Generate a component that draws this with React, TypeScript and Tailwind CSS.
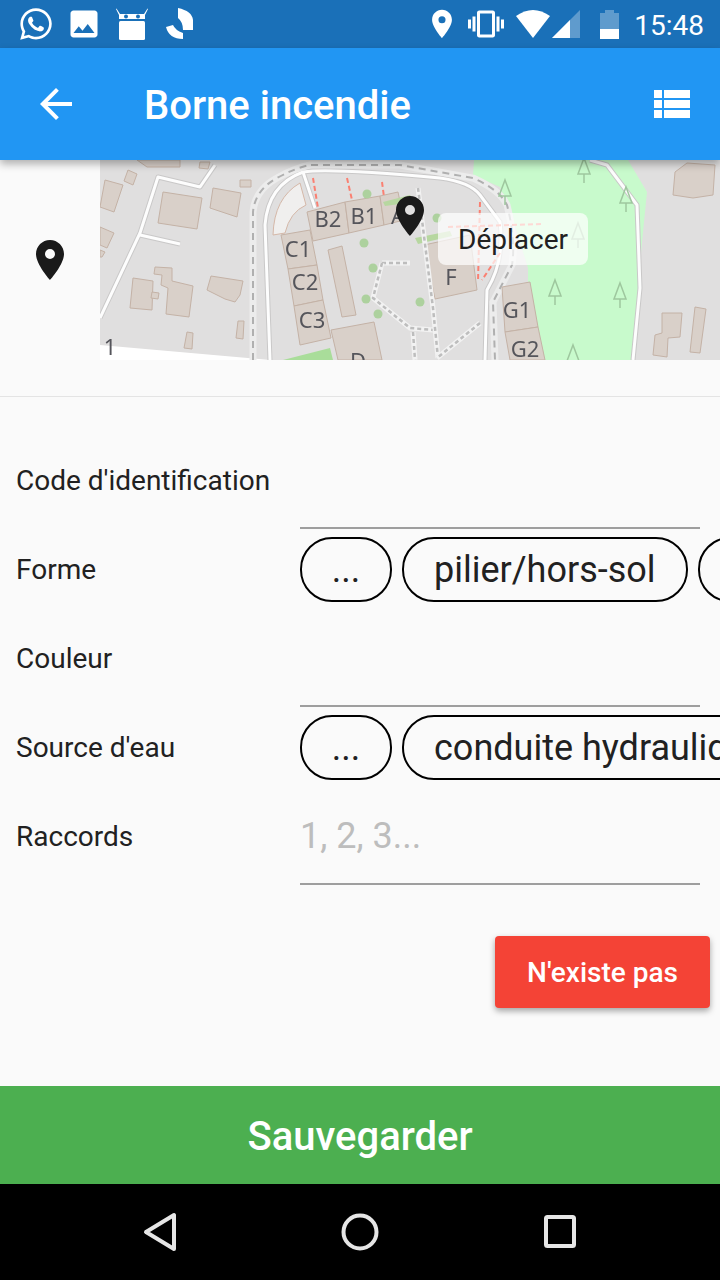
import { FaWhatsapp } from "react-icons/fa";
import { MdArrowBack, MdPhoto, MdPlace, MdVibration } from "react-icons/md";

/* ── Map data, in page coordinates ── */
const buildings = [
  "105,180 123,185 114,212 100,207",
  "128,170 137,174 133,185 124,181",
  "163,192 202,198 197,229 158,223",
  "213,188 241,193 237,217 225,213 210,208",
  "240,180 251,180 251,187 240,187",
  "137,160 180,160 180,167 147,167",
  "200,162 210,162 208,169 199,168",
  "100,227 114,233 107,248 100,245",
  "100,250 105,252 102,257 100,257",
  "133,278 153,281 152,310 130,308",
  "152,292 159,293 158,299 151,298",
  "155,267 172,268 172,281 193,286 189,317 166,314 168,288 161,285 162,275 154,274",
  "211,276 243,281 240,295 235,302 225,299 207,290",
  "187,332 193,333 192,349 184,348",
  "238,321 244,321 243,339 236,338",
  "281,235 310,230 317,265 288,269",
  "288,269 317,265 323,300 294,306",
  "294,306 323,300 331,338 300,345",
  "307,212 345,202 349,233 313,241",
  "345,202 380,196 384,225 349,233",
  "380,196 398,192 404,220 384,225",
  "328,250 342,246 356,315 342,317",
  "331,330 374,322 382,360 338,360",
  "424,245 470,235 477,290 435,299",
  "502,287 530,282 538,327 505,332",
  "505,332 538,327 545,360 510,360",
  "675,172 687,163 715,165 713,195 693,198 673,195",
  "662,313 682,313 680,337 668,338 667,357 653,355 655,335 662,333",
  "695,307 706,309 700,353 690,352",
];

const labels = [
  { t: "B2", x: 328, y: 227 },
  { t: "B1", x: 364, y: 224 },
  { t: "A", x: 398, y: 224 },
  { t: "C1", x: 298, y: 257 },
  { t: "C2", x: 305, y: 290 },
  { t: "C3", x: 312, y: 328 },
  { t: "F", x: 451, y: 285 },
  { t: "G1", x: 517, y: 318 },
  { t: "G2", x: 525, y: 357 },
  { t: "D", x: 358, y: 369 },
  { t: "1", x: 110, y: 355 },
];

const roads = [
  "M270 360 L265 225 Q268 185 303 172 Q330 168 440 178 Q470 182 480 195 L500 222 Q505 260 487 290 L485 360",
  "M100 318 L140 233 L158 177 L200 187 L215 165",
  "M140 235 L180 244",
  "M590 160 L607 165 L637 205 L640 288 L633 360",
  "M303 172 L315 208",
];

const dashed = [
  "M253 360 L253 212 Q255 190 277 178 Q295 168 310 165 L400 165 L473 178 Q500 190 507 205 Q516 240 512 265 L493 302 L495 360",
];

const footpaths = [
  "M382 263 L410 263",
  "M382 263 L373 298 L410 328 L433 330",
  "M418 188 L433 308 L438 358",
  "M480 323 L437 358",
  "M413 332 L415 360",
];

const redPaths = [
  "M313 178 L318 208",
  "M347 178 L352 200",
  "M382 182 L384 197",
  "M480 202 L478 282",
  "M448 227 L543 224",
  "M500 253 L482 280",
];

const trees = [
  [367, 194],
  [364, 243],
  [373, 268],
  [366, 299],
  [378, 314],
  [420, 302],
  [437, 218],
];

const pines = [
  [555, 280],
  [620, 283],
  [578, 223],
  [573, 345],
  [505, 180],
  [584, 158],
  [626, 187],
];

/* ── Map drawing ── */
const MapDrawing = () => (
  <svg viewBox="100 160 620 200" className="block h-[200px] w-[620px] blur-[0.7px]">
    <rect x="100" y="160" width="620" height="200" fill="#e0dfdf" />
    <polygon points="100,345 270,360 100,360" fill="#ffffff" />
    <polygon
      points="474,160 628,160 647,192 642,242 632,360 528,360 528,268 513,220 500,187 473,175"
      fill="#c8facc"
    />
    <path d="M273 235 Q274 198 300 183 L306 205 Q290 212 285 233 Z" fill="#f0efee" stroke="#d5b8a8" />
    {roads.map((d, i) => (
      <path key={i} d={d} fill="none" stroke="#c9c8c8" strokeWidth="5" strokeLinejoin="round" />
    ))}
    {roads.map((d, i) => (
      <path key={i} d={d} fill="none" stroke="#fdfdfd" strokeWidth="3" strokeLinejoin="round" />
    ))}
    {dashed.map((d, i) => (
      <g key={i}>
        <path d={d} fill="none" stroke="#ececec" strokeWidth="7" />
        <path d={d} fill="none" stroke="#b0b0b0" strokeWidth="2" strokeDasharray="7 5" />
      </g>
    ))}
    {buildings.map((p, i) => (
      <polygon key={i} points={p} fill="#d9d0c9" stroke="#c4b2a6" strokeWidth="1" />
    ))}
    <polygon points="383,202 410,195 415,202 385,206" fill="#b7d7a0" />
    <polygon points="415,238 450,231 452,236 418,244" fill="#b7d7a0" />
    <polygon points="283,360 330,348 333,360" fill="#a9dd9a" />
    {footpaths.map((d, i) => (
      <g key={i}>
        <path d={d} fill="none" stroke="#f2f2f2" strokeWidth="5" />
        <path d={d} fill="none" stroke="#bdbdbd" strokeWidth="2.5" strokeDasharray="4 3" />
      </g>
    ))}
    {redPaths.map((d, i) => (
      <path key={i} d={d} fill="none" stroke="#fa8072" strokeWidth="2" strokeDasharray="5 3" />
    ))}
    {trees.map(([x, y], i) => (
      <circle key={i} cx={x} cy={y} r="4.5" fill="#add19e" />
    ))}
    {pines.map(([x, y], i) => (
      <path
        key={i}
        d={`M${x} ${y} L${x + 6} ${y + 16} L${x - 6} ${y + 16} Z M${x} ${y + 16} L${x} ${y + 25}`}
        fill="none"
        stroke="#9ec79e"
        strokeWidth="1.5"
      />
    ))}
    {labels.map((l) => (
      <text
        key={l.t}
        x={l.x}
        y={l.y}
        textAnchor="middle"
        fontSize="22"
        fill="#55555b"
        className="font-['Noto_Sans',sans-serif]"
      >
        {l.t}
      </text>
    ))}
  </svg>
);

/* ── Form bits ── */
const Pill: React.FC<{ label: string; wide?: boolean }> = ({ label, wide }) => (
  <div
    className={`flex h-[65px] shrink-0 items-center justify-center whitespace-nowrap rounded-[32px] border-2 border-black text-[36px] text-[#212121] ${
      wide ? "px-[30px]" : "w-[92px]"
    }`}
  >
    {label}
  </div>
);

const Row: React.FC<{ label: string; children?: React.ReactNode }> = ({ label, children }) => (
  <div className="flex h-[89px] items-stretch">
    <div className="flex w-[300px] shrink-0 items-center pb-[8px] pl-[16px] text-[28px] text-[#212121]">
      {label}
    </div>
    {children}
  </div>
);

const TextField: React.FC<{ hint?: string }> = ({ hint }) => (
  <div className="flex h-[89px] w-[400px] items-center border-b-2 border-[#9e9e9e] pb-[8px] text-[36px] text-[#bdbdbd]">
    {hint}
  </div>
);

const Chips: React.FC<{ items: string[] }> = ({ items }) => (
  <div className="flex min-w-0 flex-1 gap-[10px] overflow-hidden pt-[8px]">
    <Pill label="..." />
    {items.map((it) => (
      <Pill key={it} label={it} wide />
    ))}
  </div>
);

export default function App() {
  return (
    <div className="flex h-[1280px] w-[720px] flex-col overflow-hidden bg-[#fafafa] font-['Roboto',sans-serif]">
      {/* ── Status bar ── */}
      <div className="flex h-12 shrink-0 items-center justify-between bg-[#1a70b8] pl-[18px] pr-[16px] text-white">
        <div className="flex items-center">
          <FaWhatsapp size={36} />
          <MdPhoto size={36} className="ml-[12px]" />
          <svg viewBox="0 0 32 32" className="ml-[14px] h-[32px] w-[32px]" fill="currentColor">
            <path d="M0.5 0.5 L4 6 H28 L31.5 0.5 L32 1 L29 7 V11 H3 V7 L0 1 Z" />
            <rect x="3" y="13" width="26" height="19" rx="1.5" />
            <circle cx="10" cy="8.5" r="2" fill="#1a70b8" />
            <circle cx="22" cy="8.5" r="2" fill="#1a70b8" />
          </svg>
          <svg viewBox="0 0 28 32" className="ml-[18px] h-[32px] w-[28px]" fill="currentColor">
            <path d="M12 0 Q26 3 27 12 V22 H17 Q17 14 12 10 Z" />
            <path d="M0 19 L7 17 Q9 22 17 25 V31 Q3 31 0 19 Z" />
          </svg>
        </div>
        <div className="flex items-center">
          <MdPlace size={34} />
          <MdVibration size={36} className="ml-[9px]" />
          <svg viewBox="0 0 64 28" className="ml-[12px] h-[28px] w-[64px]">
            <path d="M0 6 Q17 -6 34 6 L17 28 Z" fill="#ffffff" />
            <path d="M36 28 L64 0 V28 Z" fill="#ffffff" fillOpacity="0.3" />
            <path d="M36 28 L54 10 V28 Z" fill="#ffffff" />
          </svg>
          <svg viewBox="0 0 19 29" className="ml-[20px] h-[29px] w-[19px]">
            <path d="M5 0 H14 V3 H19 V29 H0 V3 H5 Z" fill="#ffffff" fillOpacity="0.3" />
            <rect x="0" y="19" width="19" height="10" fill="#ffffff" />
          </svg>
          <span className="ml-[15px] pt-[3px] text-[28px] leading-none">15:48</span>
        </div>
      </div>

      {/* ── App bar ── */}
      <div className="relative z-10 flex h-[112px] shrink-0 items-center bg-[#2196f3] text-white shadow-[0_4px_8px_rgba(0,0,0,0.3)]">
        <MdArrowBack size={48} className="ml-[32px]" />
        <h1 className="ml-[64px] flex-1 pt-[3px] text-[40px] font-medium">Borne incendie</h1>
        <svg viewBox="0 0 36 28" className="mr-[30px] h-[28px] w-[36px]" fill="currentColor">
          <rect x="0" y="0" width="8" height="8" />
          <rect x="10" y="0" width="26" height="8" />
          <rect x="0" y="10" width="8" height="8" />
          <rect x="10" y="10" width="26" height="8" />
          <rect x="0" y="20" width="8" height="8" />
          <rect x="10" y="20" width="26" height="8" />
        </svg>
      </div>

      {/* ── Map ── */}
      <div className="flex h-[200px] shrink-0">
        <div className="flex w-[100px] items-center justify-center text-[#1a1a1a]">
          <MdPlace size={48} />
        </div>
        <div className="relative flex-1 overflow-hidden">
          <MapDrawing />
          <MdPlace size={48} className="absolute left-[286px] top-[32px] text-[#1a1a1a]" />
          <div className="absolute left-[338px] top-[53px] flex h-[52px] w-[150px] items-center justify-center rounded-[8px] bg-white/70 pt-[1px] text-[28px] text-[#212121]">
            Déplacer
          </div>
        </div>
      </div>

      <div className="mt-[36px] h-[1px] shrink-0 bg-[#e4e4e4]" />

      {/* ── Form ── */}
      <div className="mt-[43px] shrink-0">
        <Row label="Code d'identification">
          <TextField />
        </Row>
        <Row label="Forme">
          <Chips items={["pilier/hors-sol", "enterrée"]} />
        </Row>
        <Row label="Couleur">
          <TextField />
        </Row>
        <Row label="Source d'eau">
          <Chips items={["conduite hydraulique"]} />
        </Row>
        <Row label="Raccords">
          <TextField hint="1, 2, 3..." />
        </Row>
      </div>

      <div className="mt-[51px] flex shrink-0 justify-end pr-[10px]">
        <button className="flex h-[72px] w-[215px] items-center justify-center rounded-[4px] bg-[#f44336] pt-[2px] text-[28px] font-medium text-white shadow-[0_3px_6px_rgba(0,0,0,0.35)]">
          N'existe pas
        </button>
      </div>

      <div className="flex-1" />

      {/* ── Save ── */}
      <button className="flex h-[98px] shrink-0 items-center justify-center bg-[#4caf50] pt-[3px] text-[40px] font-medium text-white">
        Sauvegarder
      </button>

      {/* ── Nav bar ── */}
      <div className="flex h-[96px] shrink-0 items-center justify-center gap-[160px] bg-black">
        <svg viewBox="0 0 40 40" className="h-[40px] w-[40px]" fill="none" stroke="#e6e6e6" strokeWidth="4" strokeLinejoin="round">
          <path d="M6 20 L34 3 V37 Z" />
        </svg>
        <svg viewBox="0 0 40 40" className="h-[40px] w-[40px]" fill="none" stroke="#e6e6e6" strokeWidth="4">
          <circle cx="20" cy="20" r="16.5" />
        </svg>
        <svg viewBox="0 0 40 40" className="h-[40px] w-[40px]" fill="none" stroke="#e6e6e6" strokeWidth="4" strokeLinejoin="round">
          <rect x="6" y="5" width="28" height="29" rx="1.5" />
        </svg>
      </div>
    </div>
  );
}
